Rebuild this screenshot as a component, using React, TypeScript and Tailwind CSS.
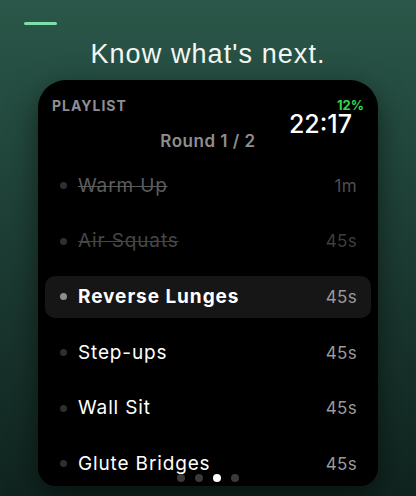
const rows = [
  { name: 'Warm Up', time: '1m', state: 'done1' },
  { name: 'Air Squats', time: '45s', state: 'done2' },
  { name: 'Reverse Lunges', time: '45s', state: 'active' },
  { name: 'Step-ups', time: '45s', state: 'next' },
  { name: 'Wall Sit', time: '45s', state: 'next' },
  { name: 'Glute Bridges', time: '45s', state: 'next' },
];

function Row({ name, time, state }: { name: string; time: string; state: string }) {
  const active = state === 'active';
  const done = state === 'done1' || state === 'done2';
  const nameColor =
    state === 'done1' ? 'text-[#5c5c5c]' : state === 'done2' ? 'text-[#464646]' : 'text-white';
  const timeColor =
    state === 'done1' ? 'text-[#4e4e4e]' : state === 'done2' ? 'text-[#3e3e3e]' : 'text-[#9a9a9a]';

  return (
    <div className="flex h-[55.6px] shrink-0 items-center px-[7px]">
      <div
        className={`flex h-[42px] w-full items-center rounded-[10px] pl-[15px] pr-[14px] ${active ? 'bg-[#161616]' : ''}`}
      >
        <span className={`h-[7px] w-[7px] shrink-0 rounded-full ${active ? 'bg-[#8e8e8e]' : 'bg-[#2e2e30]'}`} />
        <span
          className={`ml-[11px] flex-1 text-[19px] leading-[24px] ${nameColor} ${active ? 'font-bold tracking-[0.05em]' : 'font-normal tracking-[0.045em]'} ${done ? 'line-through decoration-1' : ''}`}
        >
          {name}
        </span>
        <span className={`text-[17px] leading-[24px] font-normal tracking-[0.02em] ${timeColor}`}>{time}</span>
      </div>
    </div>
  );
}

export default function App() {
  return (
    <div className="flex h-[496px] w-[416px] flex-col overflow-hidden bg-gradient-to-b from-[#2a5749] to-[#10241f] font-['Liberation_Sans',sans-serif]">
      <div className="ml-[24px] mt-[22px] h-[3px] w-[33px] rounded-full bg-[#7ddfa9]" />
      <h1 className="mt-[14px] text-center text-[27px] leading-[30px] tracking-[0.04em] text-[#f4f7f5]">Know what's next.</h1>

      <div className="relative mx-[38px] mt-[11px] h-[406px] shrink-0 overflow-hidden rounded-t-[28px] rounded-b-[18px] bg-black font-['Inter',sans-serif] shadow-[0_10px_30px_rgba(0,0,0,0.5)]">
        <div className="flex items-start justify-between pl-[14px] pr-[14px] pt-[18px]">
          <div className="text-[14px] leading-[16px] font-bold tracking-[0.07em] text-[#8e8e93]">PLAYLIST</div>
          <div className="flex flex-col items-end">
            <div className="text-[13px] leading-[14px] font-bold text-[#32d74b]">12%</div>
            <div className="mr-[12px] text-[25px] leading-[24px] font-medium text-white">22:17</div>
          </div>
        </div>
        <div className="-mt-[5px] text-center text-[17px] leading-[20px] font-semibold tracking-[0.03em] text-[#8e8e8e]">
          Round 1 / 2
        </div>

        <div className="mt-[7px] flex flex-col">
          {rows.map((r) => (
            <Row key={r.name} {...r} />
          ))}
        </div>

        <div className="absolute bottom-[4px] left-0 right-0 flex justify-center gap-[10px]">
          <span className="h-[8px] w-[8px] rounded-full bg-[#3a3a3a]" />
          <span className="h-[8px] w-[8px] rounded-full bg-[#3a3a3a]" />
          <span className="h-[8px] w-[8px] rounded-full bg-white" />
          <span className="h-[8px] w-[8px] rounded-full bg-[#3a3a3a]" />
        </div>
      </div>
    </div>
  );
}
